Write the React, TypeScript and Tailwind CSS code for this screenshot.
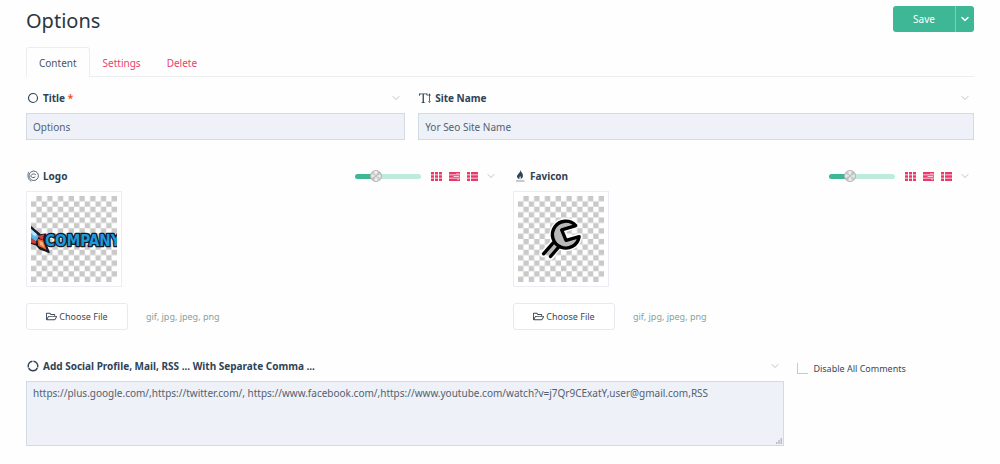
import React from 'react';
import { ChevronDown } from 'lucide-react';
import { FaRegFolderOpen } from 'react-icons/fa';

const RingIcon = () => (
  <svg className="h-3 w-3" viewBox="0 0 12 12" fill="none" stroke="currentColor">
    <circle cx="6" cy="6" r="4.5" strokeWidth="1.1" />
  </svg>
);

const BrokenRingIcon = () => (
  <svg className="h-3 w-3" viewBox="0 0 12 12" fill="none" stroke="currentColor" strokeWidth="1.4">
    <path d="M6.400 1.300A4.700 4.700 0 0 1 10.500 7.500M10.300 8A4.700 4.700 0 0 1 1.700 8M1.500 7.500A4.700 4.700 0 0 1 5.400 1.300" />
  </svg>
);

const OrbitIcon = () => (
  <svg className="h-3 w-3" viewBox="0 0 12 12" fill="none" stroke="currentColor">
    <circle cx="6.700" cy="5.800" r="4.700" strokeWidth=".8" />
    <path d="M1.700 1.800C.2 5 .8 9.800 4.200 11.300" strokeWidth=".7" />
    <path d="M3.600 6.200c1-2.600 4-2.800 5.400-1.200M3.700 6c.8 1.800 3 2 4.600.9" strokeWidth=".8" />
  </svg>
);

const TextHeightIcon = () => (
  <svg className="h-3 w-3" viewBox="0 0 12 12" fill="currentColor">
    <path d="M0 1.500h8.500v2.600H8C7.800 2.700 7.400 2.300 6.200 2.300H4.900v7.200c0 .7.300.9 1.300 1v.5H2.300v-.5c1-.1 1.300-.3 1.300-1V2.300H2.300C1.100 2.300.7 2.700.5 4.100H0z" />
    <path d="M10.100 3h.8v6.500h-.8zM9.100 3.500L10.500 1.300 11.900 3.500zM9.100 8.900L10.500 11.100 11.900 8.900z" />
  </svg>
);

const FlameIcon = () => (
  <svg className="h-3 w-3" viewBox="0 0 12 12" fill="currentColor">
    <path d="M6.500 0c.2 2 3 3.500 2.400 6.300C8.600 8 7.400 9 6.400 9.200c.9-1.300.4-2.200-.4-3.200-.1 1.200-1 1.800-.5 3.200C3.300 8.600 2.500 7 3.300 5.300 4.200 3.600 6.300 2.800 6.500 0z" />
    <path d="M2 10.500h8.500v1H2z" opacity=".55" />
  </svg>
);

const GridIcon = () => (
  <svg className="h-[11px] w-[11px]" viewBox="0 0 11 11" fill="currentColor">
    <path d="M0 1h3v2.500H0zM4 1h3v2.500H4zM8 1h3v2.500H8zM0 4.300h3v2.400H0zM4 4.300h3v2.400H4zM8 4.300h3v2.400H8zM0 7.500h3V10H0zM4 7.500h3V10H4zM8 7.500h3V10H8z" />
  </svg>
);

const TasksIcon = () => (
  <svg className="h-[11px] w-[11px]" viewBox="0 0 11 11" fill="currentColor">
    <path d="M0 1h11v2.500H0zM0 4.300h11v2.400H0zM0 7.500h11V10H0z" />
    <path d="M7 1.900h3.300v.7H7zM4.500 5.100h5.800v.7H4.500zM8 8.400h2.300v.7H8z" fill="#fff" />
  </svg>
);

const ListIcon = () => (
  <svg className="h-[11px] w-[11px]" viewBox="0 0 11 11" fill="currentColor">
    <path d="M0 1h3v2.500H0zM4 1h7v2.500H4zM0 4.300h3v2.400H0zM4 4.300h7v2.400H4zM0 7.500h3V10H0zM4 7.500h7V10H4z" />
  </svg>
);

const Checker = ({ id, children }: { id: string; children: React.ReactNode }) => (
  <div className="border border-[#ebedf2] bg-white p-1">
    <svg className="h-[86px] w-[86px]" viewBox="0 0 256 256">
      <defs>
        <pattern id={id} width="32" height="32" patternUnits="userSpaceOnUse">
          <path d="M16 0h16v16H16zM0 16h16v16H0z" fill="#c9c9c9" />
        </pattern>
      </defs>
      <rect width="256" height="256" fill={`url(#${id})`} />
      {children}
    </svg>
  </div>
);

const CompanyLogo = () => (
  <g strokeLinejoin="round">
    <path d="M0 92L28 116 43 114 41 136 53 167 38 161 26 157 16 145 0 140z" fill="#191a26" stroke="#191a26" strokeWidth="5" />
    <path d="M0 98L24 120 14 136 0 124z" fill="#56b4e8" />
    <path d="M0 98L18 114 12 121 0 110z" fill="#b9e2f7" />
    <path d="M21 119L39 114 35 131 27 126z" fill="#d63a34" />
    <path d="M0 124L16 136 13 143 0 139z" fill="#d63a34" />
    <path d="M19 127L36 132 46 160 22 149z" fill="#e8622c" />
    <path d="M25 133L34 137 40 153 27 145z" fill="#f7b07c" />
    {/* the wordmark runs past the preview frame and is cropped by it */}
    <text
      x="42"
      y="149"
      fontFamily="'DejaVu Sans Condensed', 'DejaVu Sans', sans-serif"
      fontWeight="700"
      fontSize="45"
      fill="#1d9ad7"
      stroke="#15192a"
      strokeWidth="8"
      paintOrder="stroke"
    >
      COMPANY
    </text>
  </g>
);

const Wrench = () => (
  <g strokeLinejoin="round" strokeLinecap="round">
    <path d="M104 140L74 173M118 153L97 181M172 88A40 40 0 1 0 182 121L143 132 130 101z" fill="none" stroke="#fff" strokeWidth="19" />
    <path d="M104 136L76 172 97 180 122 152z" fill="#b9b9bb" />
    <path d="M104 140L76 172M121 152L97 180" stroke="#000" strokeWidth="10" />
    <path d="M172 88A40 40 0 1 0 182 121L143 132 130 101z" fill="#b9b9bb" stroke="#000" strokeWidth="10" />
  </g>
);

type LabelProps = {
  icon: React.ReactNode;
  text: string;
  htmlFor: string;
  required?: boolean;
  children?: React.ReactNode;
};

const FieldLabel = ({ icon, text, htmlFor, required, children }: LabelProps) => (
  <div className="mb-1 flex h-[22px] items-center justify-between pr-[3px]">
    <label htmlFor={htmlFor} className="flex items-center gap-1 text-[10px] font-bold text-[#2f4356]">
      <span className="flex w-[13px] justify-end">{icon}</span>
      <span>
        {text}
        {required && <span className="text-[#f4511e]"> *</span>}
      </span>
    </label>
    <div className="flex items-center gap-[7px] text-[#e8396a]">
      {children}
      <button type="button" aria-label={`Collapse ${text}`} className="flex w-3 justify-center text-[#b8c4cf]">
        <ChevronDown className="h-3 w-3" strokeWidth={2} />
      </button>
    </div>
  </div>
);

const ImageControls = ({ name }: { name: string }) => (
  <>
    <input
      type="range"
      aria-label={`${name} preview size`}
      defaultValue={28}
      className="mr-[3px] h-[5px] w-[66px] appearance-none rounded-full bg-linear-to-r from-[#3eb797] from-30% to-[#bdebdd] to-30% [&::-webkit-slider-thumb]:h-3 [&::-webkit-slider-thumb]:w-3 [&::-webkit-slider-thumb]:appearance-none [&::-webkit-slider-thumb]:rounded-full [&::-webkit-slider-thumb]:border [&::-webkit-slider-thumb]:border-[#b4b4b4] [&::-webkit-slider-thumb]:bg-[conic-gradient(#fafafa,#b8b8b8,#f0f0f0,#c4c4c4,#fafafa,#b8b8b8,#f0f0f0,#c4c4c4,#fafafa)]"
    />
    <button type="button" aria-label={`${name} grid view`}><GridIcon /></button>
    <button type="button" aria-label={`${name} detail view`}><TasksIcon /></button>
    <button type="button" aria-label={`${name} list view`}><ListIcon /></button>
  </>
);

const FileRow = ({ id }: { id: string }) => (
  <div className="mt-4 flex items-center">
    <button
      id={id}
      type="button"
      className="flex h-[27px] w-[102px] items-center justify-center gap-[2px] rounded-[3px] border border-[#e6e9ee] bg-white text-[9px] text-[#3b4856]"
    >
      <FaRegFolderOpen className="h-[11px] w-[11px]" />
      Choose File
    </button>
    <span className="ml-[18px] text-[9px] text-[#86a39b]">gif, jpg, jpeg, png</span>
  </div>
);

const inputClass = 'block w-full border border-[#d0dbe6] bg-[#eef1f7] px-[6px] text-[10px] text-[#536171] outline-none';

const App = () => {
  return (
    <main className="min-h-screen bg-[#fefefe] px-[26px] pt-[6px] pb-[18px] font-['Noto_Sans','Open_Sans',sans-serif] text-[10px] text-[#3b4856]">
      <header className="flex h-[30px] items-start justify-between">
        <h1 className="text-[20px] leading-[30px] text-[#2b3640]">Options</h1>
        <div className="flex h-[26px] overflow-hidden rounded-[3px] bg-[#3eb797] text-white">
          <button type="button" className="w-[62px] text-[10px]">Save</button>
          <button type="button" aria-label="More save options" className="flex w-[19px] items-center justify-center border-l border-[#7fd0ba]">
            <ChevronDown className="h-3 w-3" strokeWidth={3} />
          </button>
        </div>
      </header>

      <nav className="mt-[11px] flex h-[30px] border-b border-[#ebedef] text-[10px] text-[#e8436a]">
        <a href="#content" className="flex h-[30px] items-center rounded-t-[3px] border border-b-0 border-[#ebedef] bg-[#fefefe] px-3 pt-[2px] text-[#4a5560]">
          Content
        </a>
        <a href="#settings" className="flex items-center px-[13px] pt-[3px]">Settings</a>
        <a href="#delete" className="flex items-center px-[13px] pt-[3px]">Delete</a>
      </nav>

      <div className="mt-[10px] flex">
        <div className="w-2/5">
          <FieldLabel icon={<RingIcon />} text="Title" htmlFor="title" required />
          <input id="title" type="text" defaultValue="Options" className={`${inputClass} h-[27px]`} />
        </div>
        <div className="w-3/5 pl-[13px]">
          <FieldLabel icon={<TextHeightIcon />} text="Site Name" htmlFor="site-name" />
          <input id="site-name" type="text" defaultValue="Yor Seo Site Name" className={`${inputClass} h-[27px]`} />
        </div>
      </div>

      <div className="mt-[25px] flex">
        <div className="w-1/2">
          <FieldLabel icon={<OrbitIcon />} text="Logo" htmlFor="logo">
            <ImageControls name="Logo" />
          </FieldLabel>
          <div className="flex">
            <Checker id="logo-checker"><CompanyLogo /></Checker>
          </div>
          <FileRow id="logo" />
        </div>
        <div className="w-1/2 pl-[13px]">
          <FieldLabel icon={<FlameIcon />} text="Favicon" htmlFor="favicon">
            <ImageControls name="Favicon" />
          </FieldLabel>
          <div className="flex">
            <Checker id="favicon-checker"><Wrench /></Checker>
          </div>
          <FileRow id="favicon" />
        </div>
      </div>

      <div className="mt-[25px] flex">
        <div className="w-4/5">
          <FieldLabel icon={<BrokenRingIcon />} text="Add Social Profile, Mail, RSS ... With Separate Comma ..." htmlFor="social" />
          <div className="relative">
            <textarea
              id="social"
              defaultValue="https://plus.google.com/,https://twitter.com/, https://www.facebook.com/,https://www.youtube.com/watch?v=j7Qr9CExatY,user@gmail.com,RSS"
              className={`${inputClass} h-[65px] resize-none py-1 leading-[15px]`}
            />
            <svg className="absolute right-[2px] bottom-[2px] h-[6px] w-[6px]" viewBox="0 0 6 6" fill="#b9bec5">
              <path d="M0 4h1.500v2H0zM2.200 2h1.500v4H2.200zM4.500 0H6v6H4.500z" />
            </svg>
          </div>
        </div>
        <div className="w-1/5 pt-[7px] pl-[13px]">
          <label className="flex items-center gap-[5px] text-[9px] text-[#3b4856]">
            <input type="checkbox" className="h-[11px] w-[11px] appearance-none border-b border-l border-[#c3cad1]" />
            Disable All Comments
          </label>
        </div>
      </div>
    </main>
  );
};

export default App;
